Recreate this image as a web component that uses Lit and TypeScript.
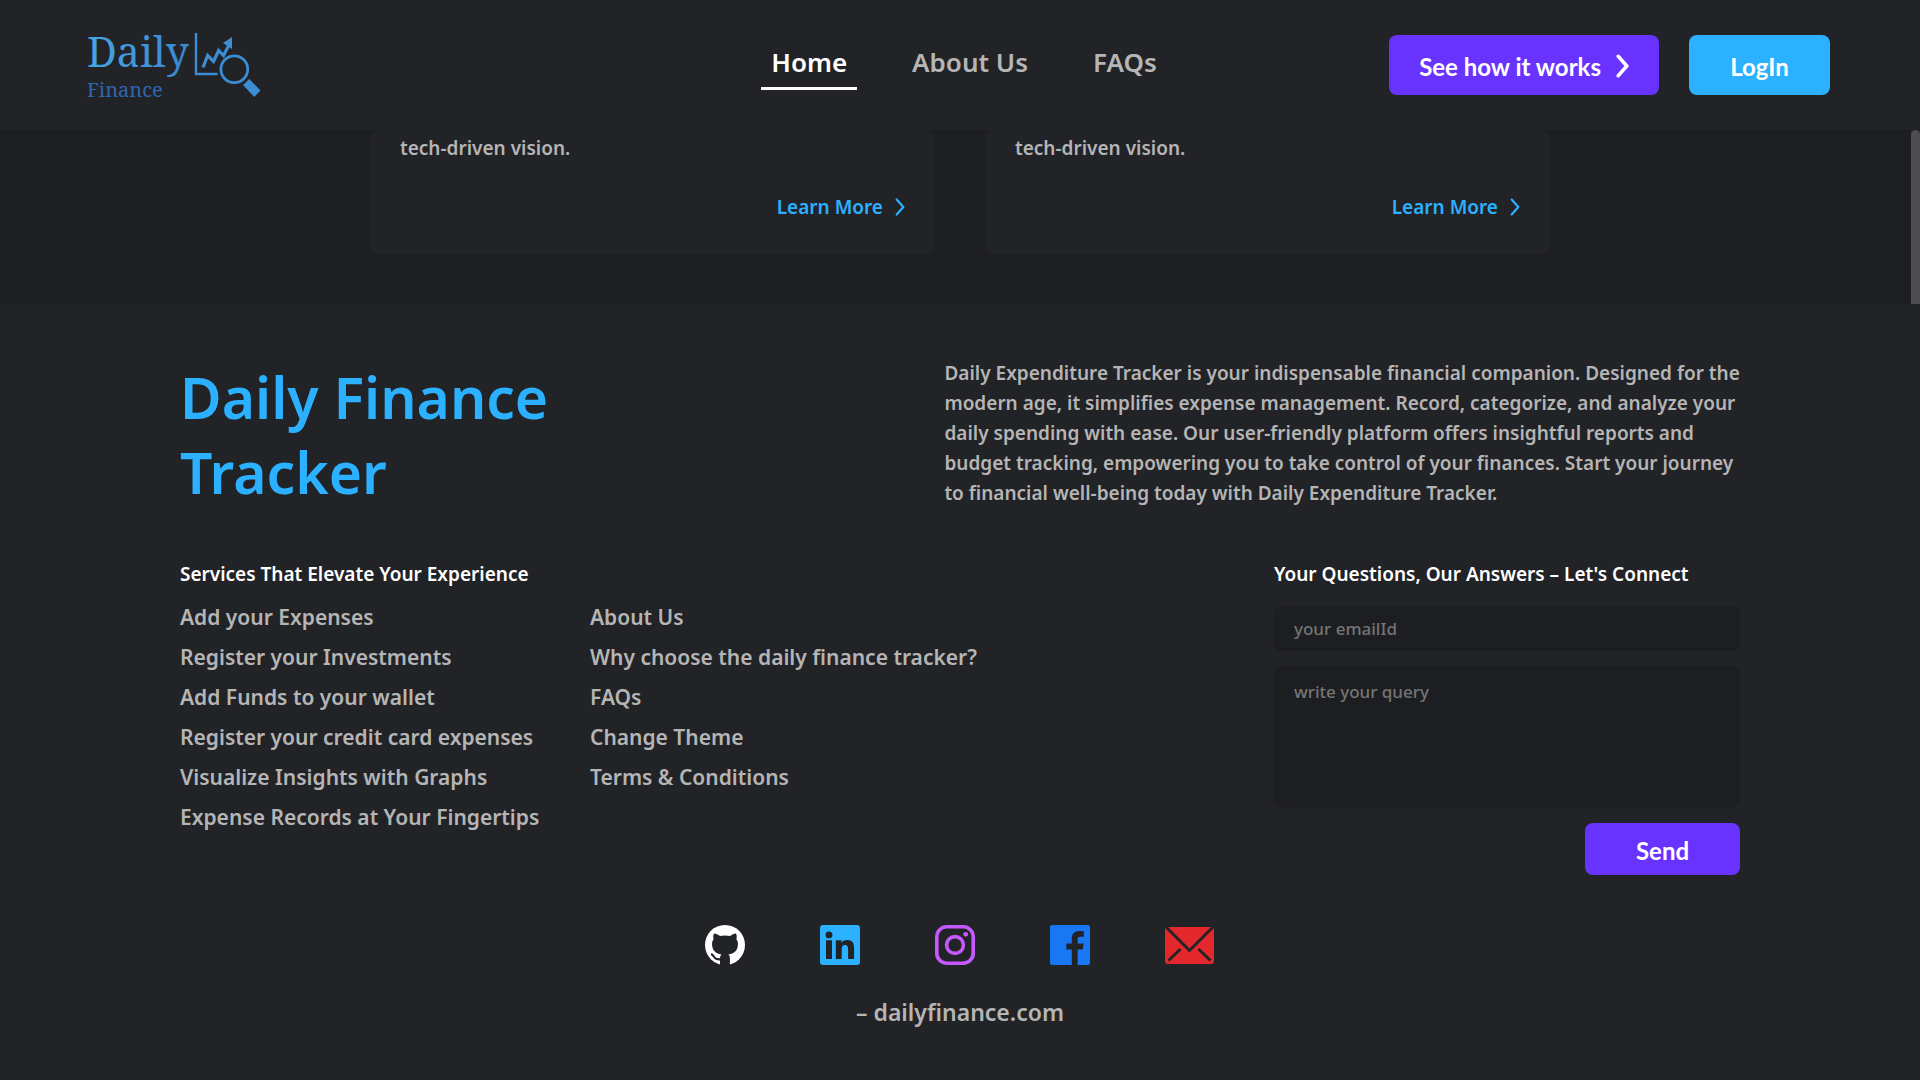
import { LitElement, html, css, svg } from "lit";
import { customElement } from "lit/decorators.js";

const services = [
  "Add your Expenses",
  "Register your Investments",
  "Add Funds to your wallet",
  "Register your credit card expenses",
  "Visualize Insights with Graphs",
  "Expense Records at Your Fingertips",
];

const links = [
  "About Us",
  "Why choose the daily finance tracker?",
  "FAQs",
  "Change Theme",
  "Terms & Conditions",
];

const chevron = (size: number, stroke: number) => html`
  <svg class="chevron" width=${size} height=${size * 2} viewBox="0 0 12 24" aria-hidden="true">
    <path d="M2 3 L10 12 L2 21" fill="none" stroke="currentColor" stroke-width=${stroke}
      stroke-linecap="round" stroke-linejoin="round" />
  </svg>`;

const socials = [
  {
    name: "GitHub", width: 40, box: "0 0 40 40",
    art: svg`<circle cx="20" cy="20" r="20" fill="#fff"/><path fill="#222327" d="M9 8.500C11 8.300 13.500 10 15 11C18 10.200 22 10.200 25 11C27 9.800 29 8.300 31 8.500C32 10.500 31.800 13 31.400 14.200C33 16 33.300 18.500 32.700 21.500C32 26 29 28.600 23.500 29.500C24.600 30.600 24.900 32 24.900 33.500V40H15V33.500C15 32 15.300 30.600 16.400 29.500C11 28.600 8 26 7.300 21.500C6.700 18.500 7 16 8.600 14.200C8.200 13 8 10.500 9 8.500Z"/><path d="M15.500 34.200C11 35 9.600 33.200 8.700 31.400C8 30.200 7.200 29.400 6 29" fill="none" stroke="#222327" stroke-width="2"/>`,
  },
  {
    name: "LinkedIn", width: 40, box: "0 0 40 40",
    art: svg`<path fill="#2bb1ff" fill-rule="evenodd" d="M3 0h34a3 3 0 0 1 3 3v34a3 3 0 0 1-3 3H3a3 3 0 0 1-3-3V3a3 3 0 0 1 3-3zM6 15.300h6V34H6zM9 6.500a3.400 3.400 0 1 0 0 6.800a3.400 3.400 0 1 0 0-6.800zM15.800 15.300h5.700v2.600c.9-1.700 2.900-3 5.800-3c5.700 0 6.800 3.700 6.800 8.700V34h-6v-9.100c0-2.200 0-5-3.100-5s-3.300 2.400-3.300 4.800V34h-5.900z"/>`,
  },
  {
    name: "Instagram", width: 40, box: "0 0 40 40",
    art: svg`<g fill="none" stroke="#c558ff" stroke-width="3.600"><rect x="1.800" y="1.800" width="36.400" height="36.400" rx="10"/><circle cx="20" cy="20" r="8.400"/></g><circle cx="30.700" cy="9.300" r="2.400" fill="#c558ff"/>`,
  },
  {
    name: "Facebook", width: 40, box: "0 0 40 40",
    art: svg`<path fill="#1877f2" d="M2.200 0h35.600A2.200 2.200 0 0 1 40 2.200v35.600a2.200 2.200 0 0 1-2.200 2.200H27.600V24.500h5.200l.8-6h-6v-3.900c0-1.700.5-2.900 3-2.900h3.200V6.300c-.6-.1-2.500-.2-4.700-.2c-4.600 0-7.300 2.800-7.300 8v4.400h-5.400v6h5.400V40H2.200A2.200 2.200 0 0 1 0 37.800V2.200A2.200 2.200 0 0 1 2.200 0z"/>`,
  },
  {
    name: "Email", width: 50, box: "0 0 50 40",
    art: svg`<rect x="0" y="2" width="49" height="37" rx="3" fill="#e2282c"/><g fill="none" stroke="#222327" stroke-width="3"><path d="M1 2 L24.500 25.500 L48 2"/><path d="M3.500 35.500 L15.500 24"/><path d="M45.500 35.500 L33.500 24"/></g>`,
  },
];

@customElement("app-root")
export class AppRoot extends LitElement {
  static styles = css`
    :host {
      display: flex;
      flex-direction: column;
      min-height: 100vh;
      background: #222327;
      color: #b5b5b5;
      font-family: "Noto Sans", "Open Sans", sans-serif;
      font-weight: 600;
    }
    * { box-sizing: border-box; margin: 0; }
    a { color: inherit; text-decoration: none; }
    ul { list-style: none; padding: 0; }

    .header {
      display: grid;
      grid-template-columns: 1fr auto 1fr;
      align-items: center;
      min-height: 130px;
      padding: 0 90px 0 86px;
    }
    .logo { justify-self: start; display: block; }
    .logo svg { overflow: visible; }
    .logo text { font-family: "Noto Serif", "Liberation Serif", serif; font-weight: 400; }
    .nav { display: flex; gap: 45px; margin-left: 12px; }
    .nav-link {
      padding: 2px 10px 6px;
      border-bottom: 3px solid transparent;
      font-size: 26px;
      line-height: 38px;
    }
    .nav-link.active { color: #fff; border-color: #fff; }
    .actions { display: flex; justify-content: flex-end; gap: 30px; }
    .button {
      display: inline-flex;
      align-items: center;
      justify-content: center;
      gap: 15px;
      border: 0;
      border-radius: 8px;
      background: #6933ff;
      color: #fff;
      font-family: Lato, sans-serif;
      font-weight: 700;
      font-size: 24px;
      cursor: pointer;
    }
    .button.large { height: 60px; padding: 2px 30px 0; }
    .button.login { min-width: 141px; background: #2bb1ff; }
    .button.send { align-self: flex-end; min-width: 155px; height: 52px; padding: 2px 0 0; }

    .viewport {
      display: flex;
      justify-content: space-between;
      background: #1d1e21;
    }
    .cards {
      flex: 1;
      display: grid;
      grid-template-columns: repeat(2, minmax(0, 565px));
      justify-content: center;
      gap: 50px;
      padding: 0 0 50px 9px;
    }
    .card {
      display: flex;
      flex-direction: column;
      justify-content: space-between;
      gap: 29px;
      padding: 3px 30px 32px;
      border-radius: 8px;
      background: #222327;
      font-size: 19px;
      line-height: 30px;
    }
    .more {
      display: flex;
      align-items: center;
      align-self: flex-end;
      gap: 12px;
      color: #2bb1ff;
    }
    .thumb { width: 9px; border-radius: 5px 5px 0 0; background: #4e4e4e; }

    .footer { padding: 54px 180px 48px; }
    .intro { display: flex; justify-content: space-between; align-items: flex-start; }
    .title {
      max-width: 400px;
      padding-top: 2px;
      color: #2bb1ff;
      font-size: 57px;
      font-weight: 600;
      line-height: 75px;
    }
    .about { width: 51%; font-size: 19px; line-height: 30px; }
    .columns { display: flex; justify-content: space-between; align-items: flex-start; margin-top: 49px; }
    .heading { color: #fff; font-size: 19px; font-weight: 600; line-height: 30px; }
    .lists { display: grid; grid-template-columns: 410px auto; }
    .lists .heading { grid-column: 1 / -1; margin-bottom: 8px; }
    .lists li { font-size: 21px; line-height: 40px; }
    .form { display: flex; flex-direction: column; gap: 15px; width: 466px; }
    .form .heading { margin-bottom: 2px; }
    .field {
      display: block;
      width: 100%;
      border: 0;
      border-radius: 8px;
      background: #1d1e21;
      color: #b5b5b5;
      padding: 10px 20px;
      font: inherit;
      font-size: 17px;
      font-weight: 500;
      line-height: 25px;
      resize: none;
    }
    .field::placeholder { color: #757575; opacity: 1; }
    .field.query { height: 142px; padding-top: 13px; }
    .socials { display: flex; justify-content: center; gap: 75px; margin-top: 50px; }
    .socials a { display: block; }
    .socials svg, .logo svg { display: block; }
    .site { margin-top: 29px; text-align: center; font-size: 23px; line-height: 36px; }
  `;

  private card() {
    return html`
      <article class="card">
        <p>tech-driven vision.</p>
        <a class="more" href="#">Learn More ${chevron(10, 2.6)}</a>
      </article>`;
  }

  render() {
    return html`
      <header class="header">
        <a class="logo" href="#" aria-label="Daily Finance">
          <svg width="176" height="84" viewBox="0 -4 176 84">
            <defs>
              <linearGradient id="ink" x1="0" x2="1"><stop offset="0" stop-color="#45a5e4"/><stop offset="1" stop-color="#3a86cf"/></linearGradient>
            </defs>
            <text x="1" y="40" font-size="41" fill="url(#ink)">Daily</text>
            <text x="1" y="70" font-size="20" fill="#2f67b0">Finance</text>
            <g fill="none" stroke="#3b8dd4">
              <path d="M110 6 V47 H131.500" stroke-width="2.400"/>
              <path d="M117 40.500 L121.700 28.500 L127.500 34.500 L132.700 23.500 L137.500 28.500 L143 18" stroke-width="3.200"/>
              <circle cx="148.300" cy="42.300" r="13.400" stroke-width="2.800"/>
            </g>
            <path d="M137 16 L146 10 L146 22 Z" fill="#3b8dd4"/>
            <path d="M157 58 L163.300 52 L174.500 63.500 L168.300 70 Z" fill="#3b8dd4"/>
          </svg>
        </a>
        <nav class="nav">
          <a class="nav-link active" href="#">Home</a>
          <a class="nav-link" href="#">About Us</a>
          <a class="nav-link" href="#">FAQs</a>
        </nav>
        <div class="actions">
          <button class="button large">See how it works ${chevron(13, 3.2)}</button>
          <button class="button large login">LogIn</button>
        </div>
      </header>
      <main class="viewport">
        <div class="cards">${this.card()}${this.card()}</div>
        <div class="thumb"></div>
      </main>
      <footer class="footer">
        <section class="intro">
          <h1 class="title">Daily Finance Tracker</h1>
          <p class="about">
            Daily Expenditure Tracker is your indispensable financial companion. Designed for the
            modern age, it simplifies expense management. Record, categorize, and analyze your
            daily spending with ease. Our user-friendly platform offers insightful reports and
            budget tracking, empowering you to take control of your finances. Start your journey
            to financial well-being today with Daily Expenditure Tracker.
          </p>
        </section>
        <section class="columns">
          <div class="lists">
            <h2 class="heading">Services That Elevate Your Experience</h2>
            <ul>${services.map((s) => html`<li><a href="#">${s}</a></li>`)}</ul>
            <ul>${links.map((s) => html`<li><a href="#">${s}</a></li>`)}</ul>
          </div>
          <form class="form">
            <h2 class="heading">Your Questions, Our Answers – Let's Connect</h2>
            <input class="field" type="email" placeholder="your emailId" aria-label="your emailId" />
            <textarea class="field query" placeholder="write your query" aria-label="write your query"></textarea>
            <button class="button send" type="button">Send</button>
          </form>
        </section>
        <div class="socials">
          ${socials.map((s) => html`
            <a href="#" aria-label=${s.name}>
              <svg width=${s.width} height="40" viewBox=${s.box}>${s.art}</svg>
            </a>`)}
        </div>
        <p class="site">– dailyfinance.com</p>
      </footer>`;
  }
}
